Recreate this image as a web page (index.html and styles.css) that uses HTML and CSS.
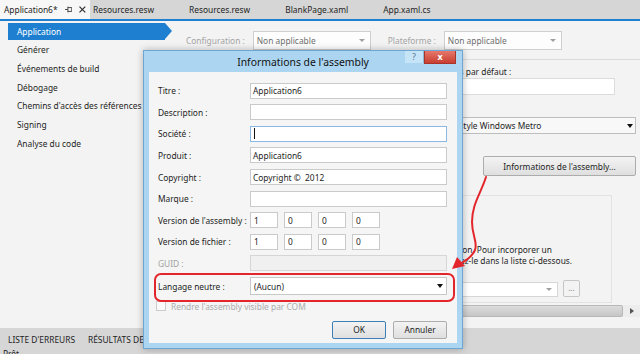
FILE: index.html
```html
<!DOCTYPE html>
<html lang="fr">
<head>
    <meta charset="UTF-8">
    <title>Application6 - Informations de l'assembly</title>
    <link rel="stylesheet" href="styles.css">
</head>
<body>
    <div id="ide">
        <div class="tabs">
            <div class="tab active">
                <span>Application6*</span>
                <svg class="tab-pin" width="8" height="7" viewBox="0 0 8 7"><path d="M0 3.5H3M3 0.5V6.5M3 1.5H7V5.5H3" fill="none" stroke="#444" stroke-width="1"/></svg>
                <svg class="tab-close" width="7" height="7" viewBox="0 0 7 7"><path d="M0.5 0.5L6.5 6.5M6.5 0.5L0.5 6.5" stroke="#333" stroke-width="1.3"/></svg>
            </div>
            <div class="tab">Resources.resw</div>
            <div class="tab">Resources.resw</div>
            <div class="tab">BlankPage.xaml</div>
            <div class="tab">App.xaml.cs</div>
        </div>

        <div class="editor">
            <ul class="side">
                <li class="selected">Application</li>
                <li>Générer</li>
                <li>Événements de build</li>
                <li>Débogage</li>
                <li>Chemins d'accès des références</li>
                <li>Signing</li>
                <li>Analyse du code</li>
            </ul>

            <div class="page">
                <div class="configbar">
                    <span class="cfg-label">Configuration :</span>
                    <div class="combo cfg-combo">Non applicable</div>
                    <span class="cfg-label cfg-gap">Plateforme :</span>
                    <div class="combo cfg-combo">Non applicable</div>
                </div>

                <div class="props">
                    <div class="prop-label">Espace de noms par défaut :</div>
                    <div class="textbox ns-box"></div>
                    <div class="select type-select">Application de style Windows Metro</div>
                    <button class="btn assembly-btn">Informations de l'assembly...</button>
                    <div class="res-box">
                        <p class="res-text">ion. Pour incorporer un<br>ez-le dans la liste ci-dessous.</p>
                        <div class="res-row">
                            <div class="combo res-combo"></div>
                            <div class="dots-btn">...</div>
                        </div>
                    </div>
                </div>

                <div class="hscroll">
                    <div class="hscroll-thumb"></div>
                    <div class="hscroll-arrow"></div>
                </div>
            </div>
        </div>

        <div class="bottom">
            <div class="bottom-tabs">
                <span>LISTE D'ERREURS</span>
                <span>RÉSULTATS DE LA RECHERCHE</span>
            </div>
            <div class="status">Prêt</div>
        </div>
    </div>

    <div class="dialog">
        <div class="titlebar">
            <span></span>
            <span class="title">Informations de l'assembly</span>
            <div class="title-buttons">
                <div class="help-btn">?</div>
                <div class="close-btn">x</div>
            </div>
        </div>
        <div class="dialog-body">
            <div class="form">
                <label>Titre :</label>
                <div class="textbox">Application6</div>
                <label>Description :</label>
                <div class="textbox"></div>
                <label>Société :</label>
                <div class="textbox focused"><span class="caret"></span></div>
                <label>Produit :</label>
                <div class="textbox">Application6</div>
                <label>Copyright :</label>
                <div class="textbox copyright">Copyright ©  2012</div>
                <label>Marque :</label>
                <div class="textbox"></div>
                <label>Version de l'assembly :</label>
                <div class="version">
                    <div class="textbox">1</div>
                    <div class="textbox">0</div>
                    <div class="textbox">0</div>
                    <div class="textbox">0</div>
                </div>
                <label>Version de fichier :</label>
                <div class="version">
                    <div class="textbox">1</div>
                    <div class="textbox">0</div>
                    <div class="textbox">0</div>
                    <div class="textbox">0</div>
                </div>
                <label class="disabled">GUID :</label>
                <div class="textbox guid"></div>
                <label>Langage neutre :</label>
                <div class="combo lang-combo">(Aucun)</div>
            </div>
            <div class="check">
                <span class="checkbox"></span>
                <span>Rendre l'assembly visible par COM</span>
            </div>
            <div class="dialog-buttons">
                <button class="btn default">OK</button>
                <button class="btn">Annuler</button>
            </div>
        </div>
    </div>

    <div class="highlight"></div>
    <svg class="callout" width="640" height="354" viewBox="0 0 640 354">
        <path d="M486 177C481 193 472 204 472 222C472 236 478 242 475 250C472 257 464 262 458 265" fill="none" stroke="#e3262b" stroke-width="2" stroke-linecap="round"/>
        <path d="M452 269L457 257L465 266Z" fill="#e3262b"/>
    </svg>
</body>
</html>
```

FILE: styles.css
```css
* {
    box-sizing: border-box;
}
html, body {
    margin: 0;
}
body {
    position: relative;
    width: 640px;
    height: 354px;
    overflow: hidden;
    font-family: "Noto Sans", "DejaVu Sans", sans-serif;
    font-size: 8.4px;
    color: #1e1e1e;
    background: #f3f3f3;
}
#ide {
    display: flex;
    flex-direction: column;
    height: 354px;
}

/* document tabs */
.tabs {
    display: flex;
    flex: none;
    height: 21px;
    background: #d6d6d6;
    border-bottom: 2px solid #1f7fd0;
}
.tab {
    display: flex;
    align-items: center;
    height: 19px;
    padding: 0 32px 0 3px;
    white-space: nowrap;
}
.tab.active {
    width: 90px;
    padding: 0 4px;
    background: #f7f7f7;
}
.tab-pin {
    margin-left: 7px;
}
.tab-close {
    margin-left: 7px;
}

/* property page */
.editor {
    display: flex;
    flex: 1;
    min-height: 0;
}
.side {
    flex: none;
    width: 175px;
    margin: 0;
    padding: 2px 0 0 8px;
    list-style: none;
}
.side li {
    position: relative;
    width: 157px;
    height: 18.75px;
    line-height: 18.75px;
    padding-left: 9px;
    white-space: nowrap;
}
.side li.selected {
    height: 17px;
    line-height: 17px;
    margin-bottom: 1px;
    background: #1e7fd1;
    color: #fff;
}
.side li.selected::after {
    content: "";
    position: absolute;
    left: 100%;
    top: 0;
    border-left: 7px solid #1e7fd1;
    border-top: 8.5px solid transparent;
    border-bottom: 8.5px solid transparent;
}
.page {
    display: flex;
    flex-direction: column;
    flex: 1;
    min-width: 0;
}
.configbar {
    display: flex;
    align-items: center;
    flex: none;
    height: 39px;
    padding: 10px 0 9px 11px;
    border-bottom: 1px solid #dcdcdc;
}
.cfg-label {
    color: #a4a4a4;
    white-space: nowrap;
}
.cfg-gap {
    margin-left: 17px;
}
.combo {
    display: flex;
    align-items: center;
    height: 19px;
    padding-left: 3px;
    border: 1px solid #cfcfcf;
    background: #fdfdfd;
    white-space: nowrap;
}
.combo::after {
    content: "";
    margin-left: auto;
    margin-right: 5px;
    border-top: 3px solid #a0a0a0;
    border-left: 3px solid transparent;
    border-right: 3px solid transparent;
}
.cfg-combo {
    width: 118px;
    margin-left: 8px;
    color: #6e6e6e;
}
.props {
    display: flex;
    flex-direction: column;
    align-items: flex-start;
    flex: none;
    padding: 6px 4px 0 225px;
}
.prop-label {
    line-height: 12px;
    white-space: nowrap;
}
.textbox {
    display: flex;
    align-items: center;
    height: 16px;
    padding-left: 2px;
    border: 1px solid #cacaca;
    background: #fff;
    white-space: pre;
    overflow: hidden;
}
.ns-box {
    width: 215px;
    height: 17px;
    border-color: #dcdcdc;
}
.select {
    display: flex;
    align-items: center;
    width: 236px;
    height: 17px;
    margin-top: 22px;
    border: 1px solid #bdbdbd;
    background: #f8f8f8;
    white-space: nowrap;
}
.select::after {
    content: "";
    margin-left: auto;
    margin-right: 2px;
    border-top: 4px solid #111;
    border-left: 3px solid transparent;
    border-right: 3px solid transparent;
}
.btn {
    height: 18px;
    padding: 0;
    border: 1px solid #acacac;
    border-radius: 2px;
    background: linear-gradient(#f3f3f3, #dfdfdf);
    font-family: inherit;
    font-size: 8.4px;
    color: #1e1e1e;
}
.assembly-btn {
    align-self: flex-end;
    width: 153px;
    height: 20px;
    margin-top: 22px;
}
.res-box {
    width: 212px;
    height: 108px;
    margin-top: 19px;
    border: 1px solid #e2e2e2;
}
.res-text {
    margin: 48px 0 0;
    padding-left: 59px;
    line-height: 11px;
    white-space: nowrap;
}
.res-row {
    display: flex;
    align-items: flex-end;
    margin-top: 14px;
}
.res-combo {
    width: 157px;
    height: 15px;
    border-color: #d6d6d6;
    background: #fff;
}
.dots-btn {
    width: 17px;
    height: 17px;
    margin-left: 5px;
    border: 1px solid #c6c6c6;
    border-radius: 2px;
    color: #8a8a8a;
    text-align: center;
    line-height: 14px;
}
.hscroll {
    display: flex;
    flex: none;
    height: 12px;
    margin-top: 2px;
    background: #ededed;
}
.hscroll-thumb {
    flex: 1;
    border: 1px solid #b8b8b8;
    border-radius: 2px;
    background: linear-gradient(#dcdcdc, #c6c6c6);
}
.hscroll-arrow {
    display: flex;
    align-items: center;
    justify-content: center;
    flex: none;
    width: 17px;
}
.hscroll-arrow::after {
    content: "";
    border-left: 4px solid #555;
    border-top: 3.5px solid transparent;
    border-bottom: 3.5px solid transparent;
}

/* tool windows */
.bottom {
    flex: none;
    height: 26px;
    background: #d6d6d6;
}
.bottom-tabs {
    display: flex;
    gap: 13px;
    height: 20px;
    padding: 6px 0 0 8px;
    line-height: 12px;
}
.status {
    padding-left: 3px;
    line-height: 12px;
}

/* dialog window */
.dialog {
    position: absolute;
    left: 143px;
    top: 50px;
    width: 320px;
    padding: 0 5px 5px;
    border: 1px solid #6ea6d3;
    background: #abd5f1;
    box-shadow: 0 0 7px rgba(0, 0, 0, 0.28);
}
.titlebar {
    display: grid;
    grid-template-columns: 52px 1fr 52px;
    height: 21px;
}
.title {
    align-self: center;
    text-align: center;
    font-size: 10.4px;
    color: #111;
    white-space: nowrap;
}
.title-buttons {
    display: flex;
    justify-content: flex-end;
    align-items: flex-start;
    padding-right: 1px;
}
.help-btn {
    width: 19px;
    height: 12px;
    background: #c6e4f7;
    border-right: 1px solid #8fb7d4;
    color: #5a7890;
    font-size: 9px;
    line-height: 12px;
    text-align: center;
}
.close-btn {
    width: 32px;
    height: 13px;
    border: 1px solid #a8342b;
    border-top: 0;
    background: linear-gradient(#e6776c, #c8402f);
    color: #fff;
    font-weight: bold;
    font-size: 9px;
    line-height: 11px;
    text-align: center;
}
.dialog-body {
    padding: 10.7px 10px 4px 9px;
    background: #f5f5f5;
}
.form {
    display: grid;
    grid-template-columns: 92px 1fr;
    row-gap: 5.6px;
    align-items: center;
}
.form label {
    white-space: nowrap;
}
.form label.disabled {
    color: #a2a2a2;
}
.focused {
    border-color: #8cb8e4;
}
.caret {
    width: 1px;
    height: 11px;
    margin-left: 1px;
    background: #111;
}
.version {
    display: flex;
    gap: 6px;
}
.version .textbox {
    width: 28px;
    padding-left: 3px;
}
.guid {
    background: #f0f0f0;
    border-color: #d6d6d6;
}
.lang-combo {
    height: 18px;
    border-color: #c8c8c8;
    background: #fff;
}
.lang-combo::after {
    border-top: 4px solid #111;
    margin-right: 3px;
}
.check {
    display: flex;
    align-items: center;
    height: 12px;
    margin-top: 5px;
    color: #ababab;
}
.checkbox {
    width: 10px;
    height: 10px;
    margin: 0 5px 0 -2px;
    border: 1px solid #cdcdcd;
    background: #fafafa;
}
.dialog-buttons {
    display: flex;
    justify-content: flex-end;
    gap: 7px;
    margin-top: 8.5px;
}
.dialog-buttons .btn {
    width: 54px;
}
.btn.default {
    border-color: #3d7fb5;
}

/* annotation drawn over the screenshot */
.highlight {
    position: absolute;
    left: 154px;
    top: 273px;
    width: 301px;
    height: 29px;
    border: 2px solid #e3262b;
    border-radius: 7px;
}
.callout {
    position: absolute;
    left: 0;
    top: 0;
    pointer-events: none;
}
```
